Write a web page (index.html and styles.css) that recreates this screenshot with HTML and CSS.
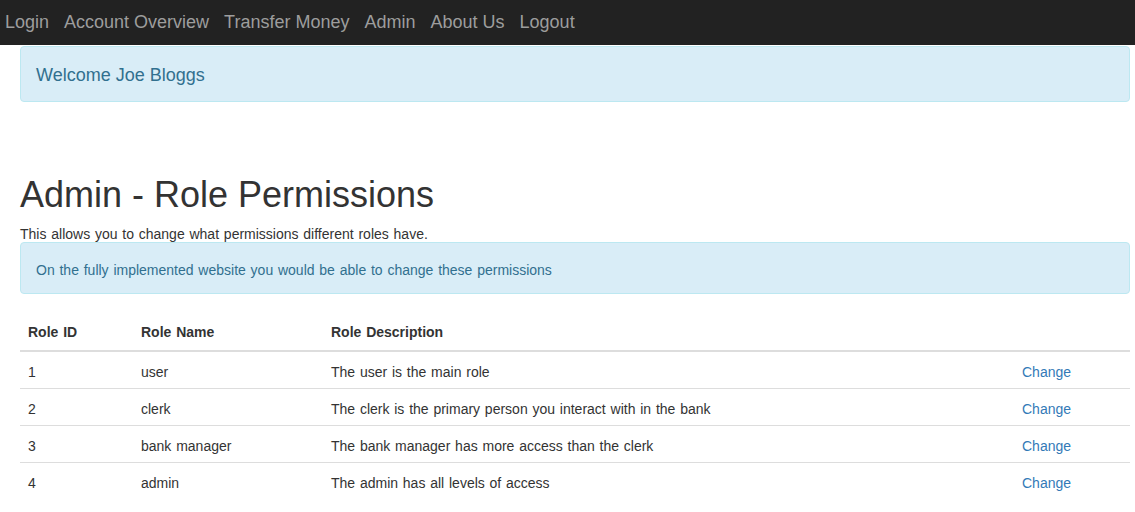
FILE: index.html
```html
<!DOCTYPE html>
<html>
<head>
<meta charset="utf-8">
<title>Admin - Role Permissions</title>
<link rel="stylesheet" href="styles.css">
</head>
<body>
<nav class="navbar">
  <a class="nav-link" href="#">Login</a>
  <a class="nav-link" href="#">Account Overview</a>
  <a class="nav-link" href="#">Transfer Money</a>
  <a class="nav-link" href="#">Admin</a>
  <a class="nav-link" href="#">About Us</a>
  <a class="nav-link" href="#">Logout</a>
</nav>
<main class="content">
  <div class="alert alert-welcome">Welcome Joe Bloggs</div>
  <h1 class="title">Admin - Role Permissions</h1>
  <p class="lead-text">This allows you to change what permissions different roles have.</p>
  <div class="alert alert-info">On the fully implemented website you would be able to change these permissions</div>
  <table class="table">
    <colgroup>
      <col class="col-id">
      <col class="col-name">
      <col class="col-desc">
      <col class="col-action">
    </colgroup>
    <thead>
      <tr><th>Role ID</th><th>Role Name</th><th>Role Description</th><th></th></tr>
    </thead>
    <tbody>
      <tr><td>1</td><td>user</td><td>The user is the main role</td><td><a class="link" href="#">Change</a></td></tr>
      <tr><td>2</td><td>clerk</td><td>The clerk is the primary person you interact with in the bank</td><td><a class="link" href="#">Change</a></td></tr>
      <tr><td>3</td><td>bank manager</td><td>The bank manager has more access than the clerk</td><td><a class="link" href="#">Change</a></td></tr>
      <tr><td>4</td><td>admin</td><td>The admin has all levels of access</td><td><a class="link" href="#">Change</a></td></tr>
    </tbody>
  </table>
</main>
</body>
</html>
```

FILE: styles.css
```css
* { box-sizing: border-box; }
html, body {
  margin: 0;
  padding: 0;
  background: #fff;
  font-family: "Liberation Sans", Arial, Helvetica, sans-serif;
  font-size: 14px;
  line-height: 20px;
  color: #333;
}
.navbar {
  display: flex;
  gap: 15px;
  height: 45px;
  padding-left: 5px;
  background: #222;
}
.nav-link {
  font-size: 18px;
  line-height: 45px;
  color: #9d9d9d;
  text-decoration: none;
}
.content {
  padding: 1px 5px 0 20px;
  word-spacing: 0.9px;
}
.alert {
  padding: 15px;
  border: 1px solid #bce8f1;
  border-radius: 4px;
  background: #d9edf7;
  color: #31708f;
}
.alert-welcome {
  font-size: 18px;
  line-height: 24px;
  padding: 16px 15px 14px;
  margin: 0 0 20px;
  word-spacing: 0;
}
.title {
  margin: 73px 0 10px;
  font-size: 36px;
  font-weight: 500;
  line-height: 39.6px;
  color: #333;
  word-spacing: 0;
}
.lead-text {
  margin: 0 0 -2px;
  line-height: 19px;
}
.alert-info {
  padding: 17px 15px 13px;
  margin: 0 0 20px;
}
.table {
  width: 100%;
  border-collapse: collapse;
  border-spacing: 0;
}
.col-id { width: 113px; }
.col-name { width: 190px; }
.col-desc { width: 691px; }
.col-action { width: 116px; }
.table th {
  padding: 8px;
  text-align: left;
  font-weight: bold;
  border-bottom: 2px solid #ddd;
  vertical-align: bottom;
}
.table td {
  padding: 10px 8px 6px;
  border-top: 1px solid #ddd;
  vertical-align: top;
}
.link {
  color: #337ab7;
  text-decoration: none;
}
```
